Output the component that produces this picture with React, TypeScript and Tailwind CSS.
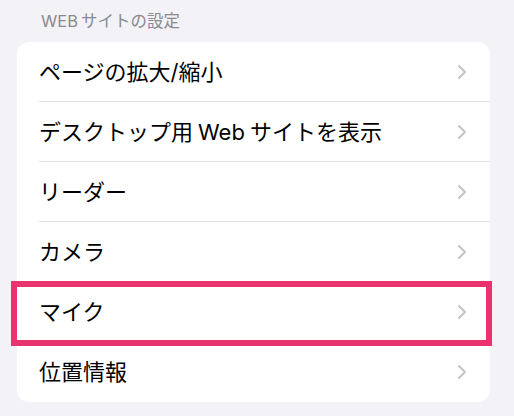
import type { ReactNode } from "react";

const rows: { id: string; label: ReactNode }[] = [
  { id: "zoom", label: "ページの拡大/縮小" },
  {
    id: "desktop",
    label: (
      <>
        デスクトップ用<span className="mx-[5px]">Web</span>サイトを表示
      </>
    ),
  },
  { id: "reader", label: "リーダー" },
  { id: "camera", label: "カメラ" },
  { id: "mic", label: "マイク" },
  { id: "location", label: "位置情報" },
];

function Chevron() {
  return (
    <svg width="10" height="16" viewBox="0 0 10 16" fill="none" className="shrink-0">
      <path
        d="M2 2l6 6-6 6"
        stroke="#c4c4c7"
        strokeWidth="2"
        strokeLinecap="round"
        strokeLinejoin="round"
      />
    </svg>
  );
}

export default function App() {
  return (
    <div
      className="w-[514px] h-[416px] bg-[#f2f2f7] overflow-hidden"
      style={{ fontFamily: 'Inter, "Noto Sans CJK JP", sans-serif' }}
    >
      <div className="pl-[41px] pt-[9px] h-[42px] text-[16.5px] leading-[24px] text-[#8a8a8e]">
        <span className="mr-[3px]">WEB</span>サイトの設定
      </div>
      <div className="ml-[17px] w-[473px] bg-white rounded-[12px]">
        {rows.map((row, i) => (
          <div key={row.id} className="relative pl-[22px]">
            <div
              className={
                "h-[60px] flex items-center justify-between pr-[23px] " +
                (i < rows.length - 1 ? "border-b border-[#e3e3e6]" : "")
              }
            >
              <span className="text-[22px] text-black leading-none">{row.label}</span>
              <Chevron />
            </div>
            {row.id === "mic" && (
              <div className="absolute left-[-6px] right-[-2px] top-[-1px] bottom-[-4px] border-[6px] border-[#e8336f]" />
            )}
          </div>
        ))}
      </div>
    </div>
  );
}
